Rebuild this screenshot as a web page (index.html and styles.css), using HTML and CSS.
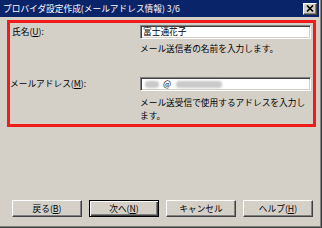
FILE: index.html
```html
<!DOCTYPE html>
<html lang="ja">
<head>
    <meta charset="UTF-8">
    <title>プロバイダ設定作成(メールアドレス情報) 3/6</title>
    <link rel="stylesheet" href="styles.css">
</head>
<body>
    <div class="window">
        <div class="titlebar">
            <span class="title">プロバイダ設定作成(メールアドレス情報) 3/6</span>
            <button class="close-btn" aria-label="閉じる">
                <svg width="8" height="7" viewBox="0 0 8 7">
                    <path d="M1 0.5 L7 6.5 M7 0.5 L1 6.5" stroke="#000" stroke-width="1.6" fill="none"/>
                </svg>
            </button>
        </div>

        <div class="content">
            <div class="highlight">
                <div class="field-row first">
                    <label class="label">氏名(<u>U</u>):</label>
                    <div class="field">
                        <div class="textbox">富士通花子</div>
                        <p class="hint">メール送信者の名前を入力します。</p>
                    </div>
                </div>
                <div class="field-row second">
                    <label class="label">メールアドレス(<u>M</u>):</label>
                    <div class="field">
                        <div class="textbox">
                            <span class="blur short"></span>@<span class="blur long"></span>
                        </div>
                        <p class="hint wrap">メール送受信で使用するアドレスを入力し<br>ます。</p>
                    </div>
                </div>
            </div>

            <div class="buttons">
                <button class="btn">戻る(<u>B</u>)</button>
                <button class="btn default">次へ(<u>N</u>)</button>
                <button class="btn">キャンセル</button>
                <button class="btn">ヘルプ(<u>H</u>)</button>
            </div>
        </div>
    </div>
</body>
</html>
```

FILE: styles.css
```css
:root {
    --face: #d4d0c8;
    --shadow: #808080;
    --dark: #404040;
    --title-bg: #0a246a;
    --mark: #f01c1c;
}

* {
    margin: 0;
    padding: 0;
    box-sizing: border-box;
}

body {
    font-family: "Noto Sans CJK JP", "Noto Sans", sans-serif;
    font-size: 8.7px;
    color: #000;
    background: var(--face);
}

.window {
    width: 322px;
    height: 228px;
    display: flex;
    flex-direction: column;
    background: var(--face);
    padding: 0 2px 2px 0;
    border-right: 1px solid var(--dark);
    border-bottom: 1px solid var(--dark);
    box-shadow: inset -1px -1px var(--shadow);
}

.titlebar {
    height: 17px;
    display: flex;
    align-items: center;
    justify-content: space-between;
    background: var(--title-bg);
    padding: 0 2px 0 3px;
}

.title {
    color: #fff;
    line-height: 17px;
    white-space: nowrap;
}

.close-btn {
    width: 14px;
    height: 12px;
    display: flex;
    align-items: center;
    justify-content: center;
    background: var(--face);
    border: 1px solid;
    border-color: #fff var(--dark) var(--dark) #fff;
    box-shadow: inset -1px -1px var(--shadow);
}

.content {
    flex: 1;
    display: flex;
    flex-direction: column;
}

.highlight {
    margin: 3px 3px 0 7px;
    height: 107px;
    border: 3px solid var(--mark);
    padding: 2px 2px 0 0;
}

.field-row {
    display: grid;
    grid-template-columns: 130px 1fr;
}

.field-row.second {
    margin-top: 23px;
}

.label {
    line-height: 14px;
    white-space: nowrap;
    padding-left: 2px;
}

.field-row.second .label {
    padding-left: 0;
}

.textbox {
    height: 14px;
    background: #fff;
    border: 1px solid;
    border-color: var(--shadow) #fff #fff var(--shadow);
    box-shadow: inset 1px 1px var(--dark), inset -1px -1px var(--face);
    padding: 0 2px;
    line-height: 12px;
    display: flex;
    align-items: center;
    white-space: nowrap;
}

.blur {
    display: inline-block;
    height: 7px;
    background: #c9c9c9;
    border-radius: 3px;
    filter: blur(1.2px);
}

.blur.short {
    width: 14px;
    margin: 0 4px 0 2px;
}

.blur.long {
    width: 46px;
    margin-left: 5px;
}

.hint {
    margin-top: 5px;
    line-height: 10px;
    white-space: nowrap;
}

.hint.wrap {
    margin-top: 6px;
    line-height: 12.6px;
}

.buttons {
    margin-top: auto;
    margin-bottom: 8px;
    display: flex;
    gap: 7px;
    padding-left: 12px;
}

.btn {
    width: 70px;
    height: 17px;
    font-family: inherit;
    font-size: 8.7px;
    line-height: 13px;
    color: #000;
    background: var(--face);
    border: 1px solid;
    border-color: #fff var(--dark) var(--dark) #fff;
    box-shadow: inset -1px -1px var(--shadow);
}

.btn.default {
    border: 1px solid #000;
    box-shadow: inset 1px 1px #fff, inset -1px -1px var(--dark), inset -2px -2px var(--shadow);
}
```
